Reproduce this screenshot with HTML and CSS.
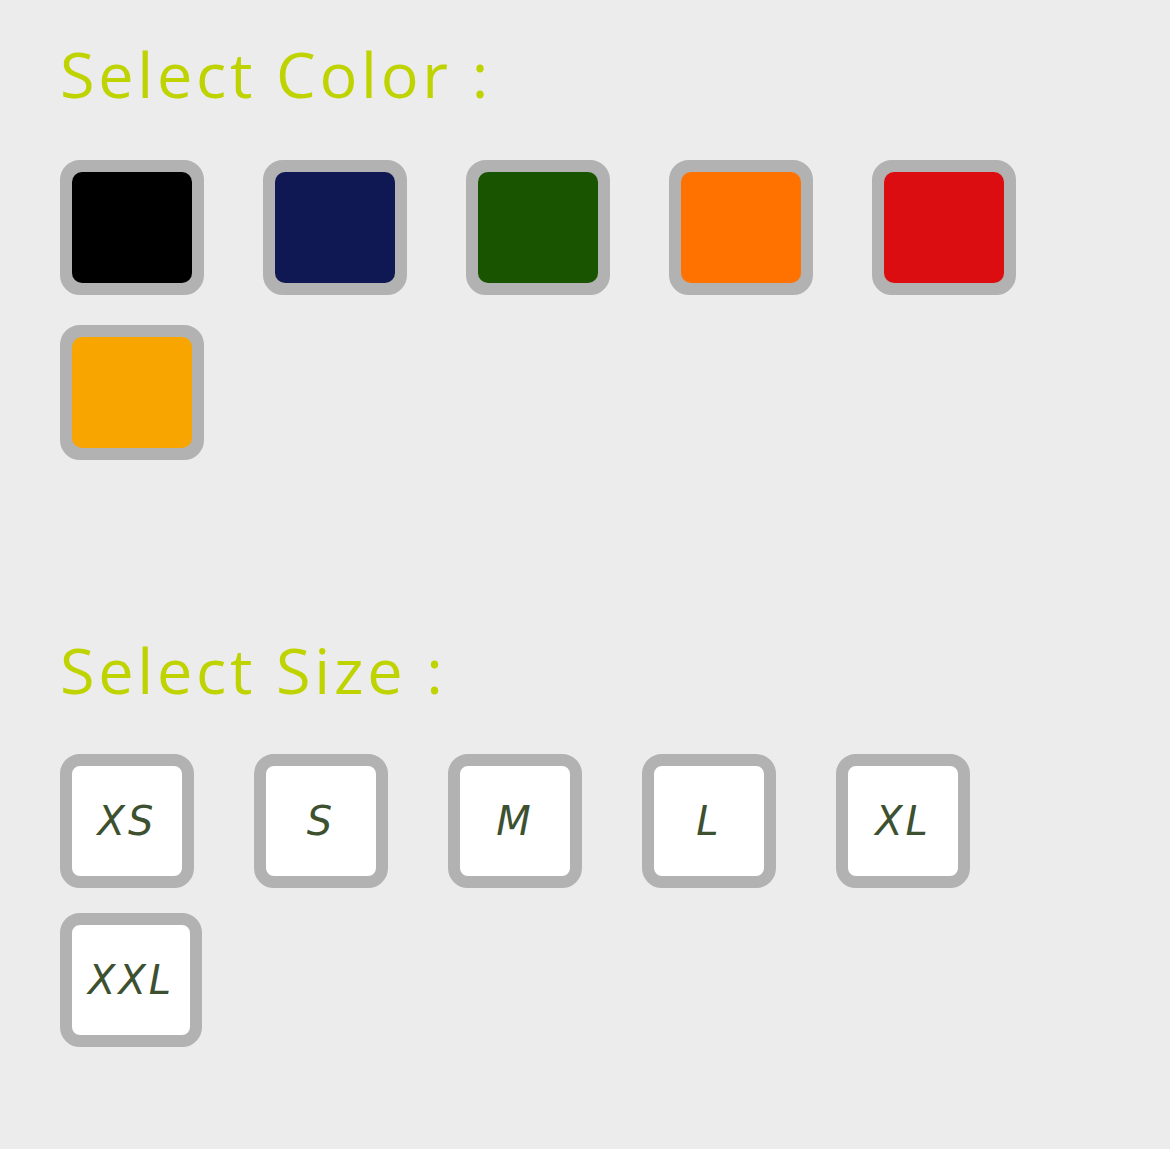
FILE: index.html
```html
<!DOCTYPE html>
<html lang="en">
<head>
<meta charset="utf-8">
<title>Select options</title>
<link rel="stylesheet" href="styles.css">
</head>
<body>
<main class="page">
  <section class="group group-color">
    <h2 class="title">Select Color :</h2>
    <div class="swatches">
      <span class="swatch"><span class="fill c-black"></span></span>
      <span class="swatch"><span class="fill c-navy"></span></span>
      <span class="swatch"><span class="fill c-green"></span></span>
      <span class="swatch"><span class="fill c-orange"></span></span>
      <span class="swatch"><span class="fill c-red"></span></span>
      <span class="swatch"><span class="fill c-amber"></span></span>
    </div>
  </section>
  <section class="group group-size">
    <h2 class="title">Select Size :</h2>
    <div class="sizes">
      <span class="size">XS</span>
      <span class="size">S</span>
      <span class="size">M</span>
      <span class="size">L</span>
      <span class="size">XL</span>
      <span class="size">XXL</span>
    </div>
  </section>
</main>
</body>
</html>
```
FILE: styles.css
```css
html, body {
  margin: 0;
  padding: 0;
  background: #ececec;
}
body {
  font-family: "Open Sans", "Liberation Sans", sans-serif;
  min-height: 1149px;
}
.page {
  width: 1000px;
  padding: 0 0 0 60px;
}
.title {
  margin: 0;
  font-weight: 500;
  font-size: 63px;
  line-height: 1;
  letter-spacing: 3.7px;
  color: #bfd300;
}
.group-color .title {
  padding-top: 42px;
}
.swatches {
  display: flex;
  flex-wrap: wrap;
  column-gap: 59px;
  row-gap: 30px;
  margin-top: 55px;
}
.swatch {
  display: block;
  width: 120px;
  height: 111px;
  border: 12px solid #b2b2b2;
  border-radius: 20px;
  background: #b2b2b2;
}
.fill {
  display: block;
  width: 100%;
  height: 100%;
  border-radius: 10px;
}
.c-black { background: #000000; }
.c-navy { background: #101853; }
.c-green { background: #195401; }
.c-orange { background: #ff7200; }
.c-red { background: #db0d10; }
.c-amber { background: #f8a500; }

.group-size {
  margin-top: 178px;
}
.sizes {
  display: flex;
  flex-wrap: wrap;
  column-gap: 60px;
  row-gap: 25px;
  margin-top: 53px;
}
.size {
  display: flex;
  align-items: center;
  justify-content: center;
  box-sizing: content-box;
  min-width: 78px;
  height: 110px;
  padding: 0 16px;
  border: 12px solid #b2b2b2;
  border-radius: 20px;
  background: #ffffff;
  font-family: "DejaVu Sans", "Open Sans", sans-serif;
  font-style: italic;
  font-size: 40px;
  color: #3d5130;
  letter-spacing: 3px;
}
```
